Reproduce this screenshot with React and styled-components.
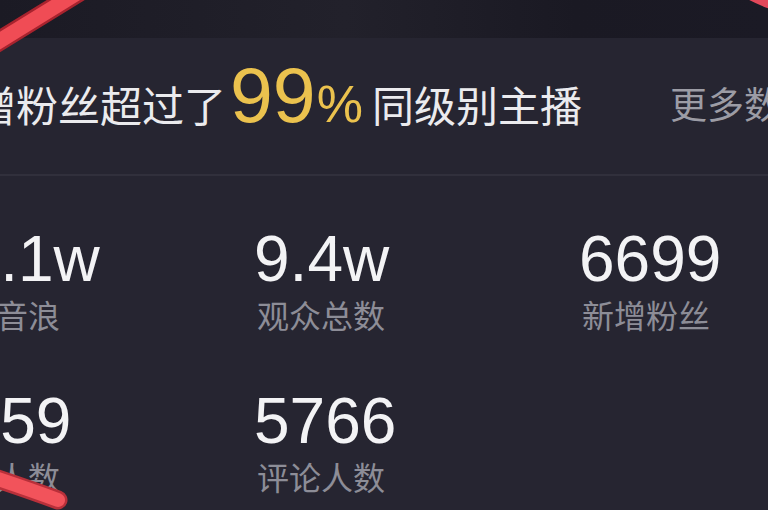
import React from 'react';
import styled, { createGlobalStyle } from 'styled-components';

const GlobalStyle = createGlobalStyle`
    html, body {
        margin: 0;
        padding: 0;
        background: #262531;
    }
    body {
        font-family: "Noto Sans CJK SC", "Noto Sans", sans-serif;
        overflow: hidden;
    }
`;

const stats = [
    { value: '12.1w', label: '本场音浪' },
    { value: '9.4w', label: '观众总数' },
    { value: '6699', label: '新增粉丝' },
    { value: '1259', label: '送礼人数' },
    { value: '5766', label: '评论人数' },
];

function App() {
    return (
        <Page>
            <GlobalStyle />
            <TopBar />

            <Card>
                <Header>
                    <Summary>
                        新增粉丝超过了
                        <Rank>
                            99<small>%</small>
                        </Rank>
                        同级别主播
                    </Summary>
                    <More>更多数据</More>
                </Header>

                <Divider />

                <StatsGrid>
                    {stats.map((s) => (
                        <Stat key={s.label}>
                            <Value>{s.value}</Value>
                            <Label>{s.label}</Label>
                        </Stat>
                    ))}
                </StatsGrid>
            </Card>

            {/* hand-drawn red marks over the screenshot */}
            <Marks viewBox="0 0 768 510">
                <path d="M -12 48 Q 30 22 82 -10" stroke="#a8232e" strokeWidth="20" fill="none" strokeLinecap="round" />
                <path d="M -12 48 Q 30 22 82 -10" stroke="#f04c55" strokeWidth="15" fill="none" strokeLinecap="round" />
                <path d="M -8 477 Q 28 489 58 500" stroke="#b8303a" strokeWidth="19" fill="none" strokeLinecap="round" />
                <path d="M -8 477 Q 28 489 58 500" stroke="#f2535b" strokeWidth="14" fill="none" strokeLinecap="round" />
                <path d="M 746 -8 Q 760 0 778 6" stroke="#e2485a" strokeWidth="11" fill="none" strokeLinecap="round" />
            </Marks>
        </Page>
    );
}

const Page = styled.div`
    position: relative;
    width: 768px;
    height: 510px;
    overflow: hidden;
    background: #262531;
`;

const TopBar = styled.div`
    height: 38px;
    background: linear-gradient(90deg, #1b1a24 0%, #22212b 45%, #1a1923 75%, #1b1a25 100%);
`;

const Card = styled.div`
    width: calc(100% + 68px);
    margin-left: -68px;
    background: #262531;
`;

const Header = styled.div`
    height: 136px;
    box-sizing: border-box;
    padding-bottom: 21px;
    display: flex;
    align-items: center;
    white-space: nowrap;
`;

const Summary = styled.div`
    display: flex;
    align-items: baseline;
    font-size: 42px;
    color: #ebebee;
`;

const Rank = styled.span`
    font-family: "Liberation Sans", Arial, sans-serif;
    font-size: 77px;
    color: #ebc24e;
    margin: 0 9px 0 4px;
    line-height: 1;

    small {
        font-size: 52px;
        margin-left: 1px;
    }
`;

const More = styled.span`
    margin-left: 88px;
    margin-top: 14px;
    font-size: 37px;
    color: #9c9ca5;
`;

const Divider = styled.div`
    height: 2px;
    background: #31303c;
`;

const StatsGrid = styled.div`
    display: grid;
    grid-template-columns: repeat(3, 325px);
    row-gap: 60px;
    padding-top: 52px;
    margin-left: -3px;
`;

const Stat = styled.div`
    display: flex;
    flex-direction: column;
`;

const Value = styled.div`
    font-family: "Liberation Sans", Arial, sans-serif;
    font-size: 64px;
    line-height: 63px;
    color: #f3f3f5;
`;

const Label = styled.div`
    margin-top: 7px;
    margin-left: 3px;
    font-size: 32px;
    line-height: 32px;
    color: #8d8d97;
`;

const Marks = styled.svg`
    position: absolute;
    left: 0;
    top: 0;
    width: 768px;
    height: 510px;
    pointer-events: none;
`;

export default App;
